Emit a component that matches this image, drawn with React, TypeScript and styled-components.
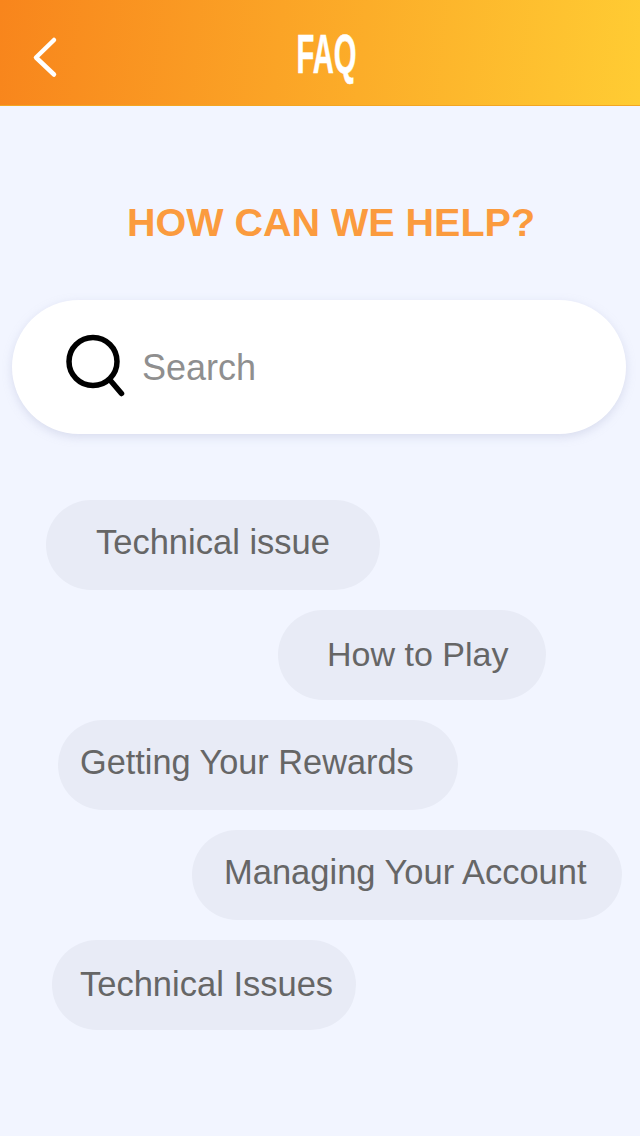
import React from "react";
import styled, { createGlobalStyle } from "styled-components";

const Global = createGlobalStyle`
  html, body { margin: 0; padding: 0; background: #f2f5ff; }
  body { font-family: "Liberation Sans", Arial, sans-serif; }
`;

const Page = styled.div`
  width: 640px;
  height: 1136px;
  overflow: hidden;
  background: #f2f5ff;
  display: flex;
  flex-direction: column;
`;

const Header = styled.header`
  height: 106px;
  flex: none;
  box-sizing: border-box;
  display: flex;
  align-items: center;
  justify-content: center;
  position: relative;
  background: linear-gradient(96deg, #f8851c 0%, #ffcc33 100%);
  border-bottom: 1px solid #f3a623;
`;

const BackButton = styled.button`
  position: absolute;
  left: 30px;
  top: 34px;
  width: 30px;
  height: 46px;
  padding: 0;
  border: 0;
  background: none;
  display: flex;
`;

const HeaderTitle = styled.h1`
  margin: 3px 0 0 14px;
  color: #fff;
  font-family: "Liberation Sans", Arial, sans-serif;
  font-size: 55px;
  line-height: 54px;
  font-weight: 700;
  transform: scaleX(0.53);
  -webkit-text-stroke: 0.6px #fff;
`;

const Heading = styled.h2`
  margin: 94px 0 0 22px;
  text-align: center;
  color: #fb9b3e;
  font-size: 39.5px;
  line-height: 44px;
  font-weight: 700;
`;

const SearchBar = styled.div`
  margin: 56px 0 0 12px;
  width: 614px;
  height: 134px;
  box-sizing: border-box;
  padding-left: 52px;
  border-radius: 67px;
  background: #fff;
  box-shadow: 0 3px 10px rgba(170, 176, 205, 0.35);
  display: flex;
  align-items: center;
  gap: 16px;
`;

const SearchText = styled.span`
  color: #8f8f8f;
  font-size: 36px;
  line-height: 40px;
  margin-top: 2px;
`;

const Pills = styled.div`
  margin-top: 66px;
  display: flex;
  flex-direction: column;
  align-items: flex-start;
  gap: 20px;
`;

const Pill = styled.div<{ $x: number; $w: number; $pad: number; $lift: number; $size: number }>`
  margin-left: ${(p) => p.$x}px;
  width: ${(p) => p.$w}px;
  height: 90px;
  box-sizing: border-box;
  padding-left: ${(p) => p.$pad}px;
  padding-bottom: ${(p) => p.$lift}px;
  border-radius: 45px;
  background: #e8ebf6;
  color: #666;
  font-size: ${(p) => p.$size}px;
  white-space: nowrap;
  display: flex;
  align-items: center;
`;

const items = [
  { t: "Technical issue", x: 46, w: 334, pad: 50, lift: 5, size: 34.5 },
  { t: "How to Play", x: 278, w: 268, pad: 49, lift: 2, size: 34 },
  { t: "Getting Your Rewards", x: 58, w: 400, pad: 22, lift: 6, size: 34.3 },
  { t: "Managing Your Account", x: 192, w: 430, pad: 32, lift: 6, size: 34.5 },
  { t: "Technical Issues", x: 52, w: 304, pad: 28, lift: 2, size: 34.5 },
];

export default function App() {
  return (
    <Page>
      <Global />
      <Header>
        <BackButton aria-label="Back">
          <svg width="30" height="46" viewBox="0 0 30 46" fill="none">
            <path d="M24 6 L6 23.5 L24 40.5" stroke="#fff" strokeWidth="4.5" strokeLinecap="round" strokeLinejoin="round" />
          </svg>
        </BackButton>
        <HeaderTitle>FAQ</HeaderTitle>
      </Header>
      <Heading>HOW CAN WE HELP?</Heading>
      <SearchBar>
        <svg width="62" height="66" viewBox="0 0 62 66" fill="none">
          <circle cx="29" cy="27.5" r="24" stroke="#000" strokeWidth="5.5" />
          <path d="M46 46 L57.5 59.5" stroke="#000" strokeWidth="5.5" strokeLinecap="round" />
        </svg>
        <SearchText>Search</SearchText>
      </SearchBar>
      <Pills>
        {items.map((i) => (
          <Pill key={i.t} $x={i.x} $w={i.w} $pad={i.pad} $lift={i.lift} $size={i.size}>{i.t}</Pill>
        ))}
      </Pills>
    </Page>
  );
}
